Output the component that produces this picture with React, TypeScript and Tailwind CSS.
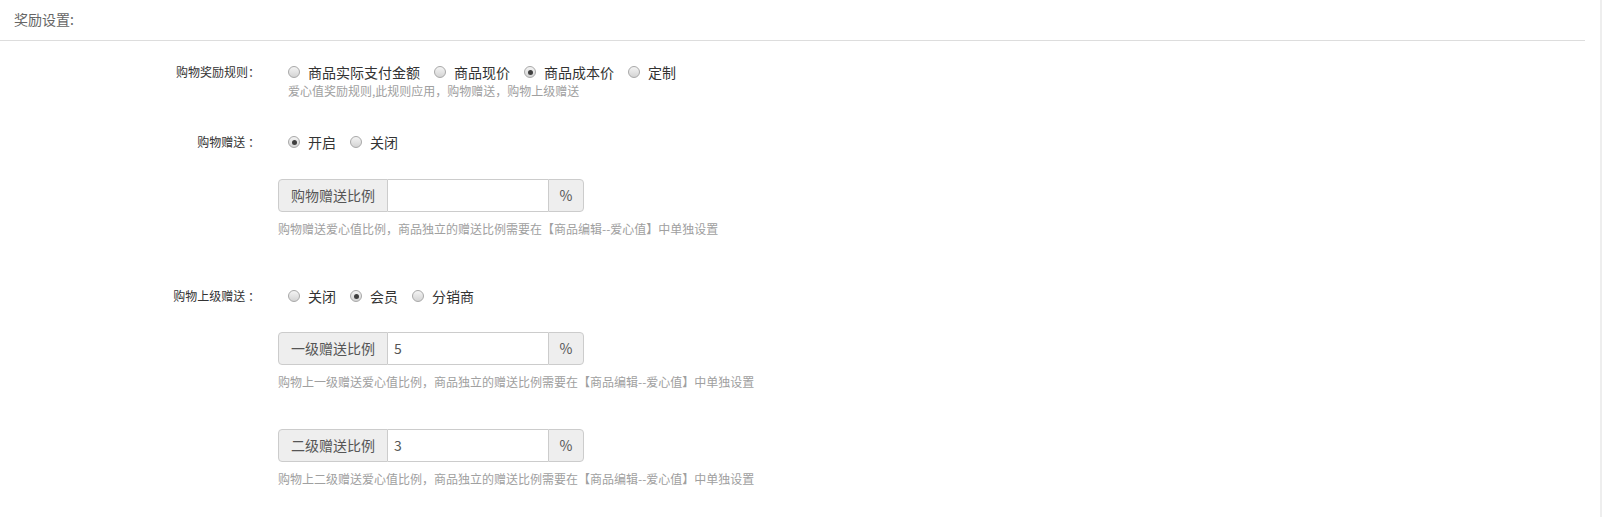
import React from "react";

function Radio({ checked, label }: { checked?: boolean; label: string }) {
  return (
    <span className="inline-flex items-center mr-[14px]">
      <span className="w-[12px] h-[12px] rounded-full border border-[#a8a8a8] bg-linear-to-b from-[#f4f4f4] to-[#d4d4d4] flex items-center justify-center shrink-0">
        {checked && <span className="w-[5px] h-[5px] rounded-full bg-[#3f3f3f]" />}
      </span>
      <span className="ml-[8px]">{label}</span>
    </span>
  );
}

function Label({ text }: { text: string }) {
  return (
    <div className="w-[260px] shrink-0 text-right text-[12px] text-[#333] leading-[20px]">{text}</div>
  );
}

function InputGroup({ addon, value }: { addon: string; value: string }) {
  return (
    <div className="flex h-[33px] w-[306px] text-[14px]">
      <div className="w-[110px] flex items-center justify-center bg-[#eeeeee] border border-[#cccccc] rounded-l-[4px] text-[#555]">
        {addon}
      </div>
      <div className="w-[160px] flex items-center bg-white border-y border-[#cccccc] pl-[6px] text-[#555]">
        {value}
      </div>
      <div className="w-[36px] flex items-center justify-center bg-[#eeeeee] border border-[#cccccc] rounded-r-[4px] text-[#555]">
        %
      </div>
    </div>
  );
}

function Help({ text, indent }: { text: string; indent?: boolean }) {
  return (
    <div className={`text-[12px] leading-[17px] text-[#a0a0a0] ${indent ? "pl-[10px]" : ""}`}>{text}</div>
  );
}

export default function App() {
  return (
    <div className="flex min-h-[517px] w-full bg-white font-['Noto_Sans_CJK_SC','Liberation_Sans',sans-serif]">
      <div className="flex-1 pr-[15px]">
        <div className="h-[41px] border-b border-[#dddddd] pl-[14px] pt-[10px]">
          <div className="text-[14px] leading-[18px] text-[#666]">奖励设置:</div>
        </div>

        {/* Row 1 */}
        <div className="flex mt-[21px]">
          <Label text="购物奖励规则：" />
          <div className="ml-[18px]">
            <div className="pl-[10px] flex items-center h-[20px] text-[14px] text-[#333]">
              <Radio label="商品实际支付金额" />
              <Radio label="商品现价" />
              <Radio checked label="商品成本价" />
              <Radio label="定制" />
            </div>
            <Help indent text="爱心值奖励规则,此规则应用，购物赠送，购物上级赠送" />
          </div>
        </div>

        {/* Row 2 */}
        <div className="flex mt-[33px]">
          <Label text="购物赠送 ：" />
          <div className="ml-[18px]">
            <div className="pl-[10px] flex items-center h-[20px] text-[14px] text-[#333]">
              <Radio checked label="开启" />
              <Radio label="关闭" />
            </div>
          </div>
        </div>

        <div className="ml-[278px] mt-[27px]">
          <InputGroup addon="购物赠送比例" value="" />
          <div className="mt-[8px]">
            <Help text="购物赠送爱心值比例，商品独立的赠送比例需要在【商品编辑--爱心值】中单独设置" />
          </div>
        </div>

        {/* Row 3 */}
        <div className="flex mt-[49px]">
          <Label text="购物上级赠送 ：" />
          <div className="ml-[18px]">
            <div className="pl-[10px] flex items-center h-[20px] text-[14px] text-[#333]">
              <Radio label="关闭" />
              <Radio checked label="会员" />
              <Radio label="分销商" />
            </div>
          </div>
        </div>

        <div className="ml-[278px] mt-[26px]">
          <InputGroup addon="一级赠送比例" value="5" />
          <div className="mt-[8px]">
            <Help text="购物上一级赠送爱心值比例，商品独立的赠送比例需要在【商品编辑--爱心值】中单独设置" />
          </div>
        </div>

        <div className="ml-[278px] mt-[39px]">
          <InputGroup addon="二级赠送比例" value="3" />
          <div className="mt-[8px]">
            <Help text="购物上二级赠送爱心值比例，商品独立的赠送比例需要在【商品编辑--爱心值】中单独设置" />
          </div>
        </div>
      </div>
      <div className="w-[2px] bg-[#eeeeee]" />
    </div>
  );
}
